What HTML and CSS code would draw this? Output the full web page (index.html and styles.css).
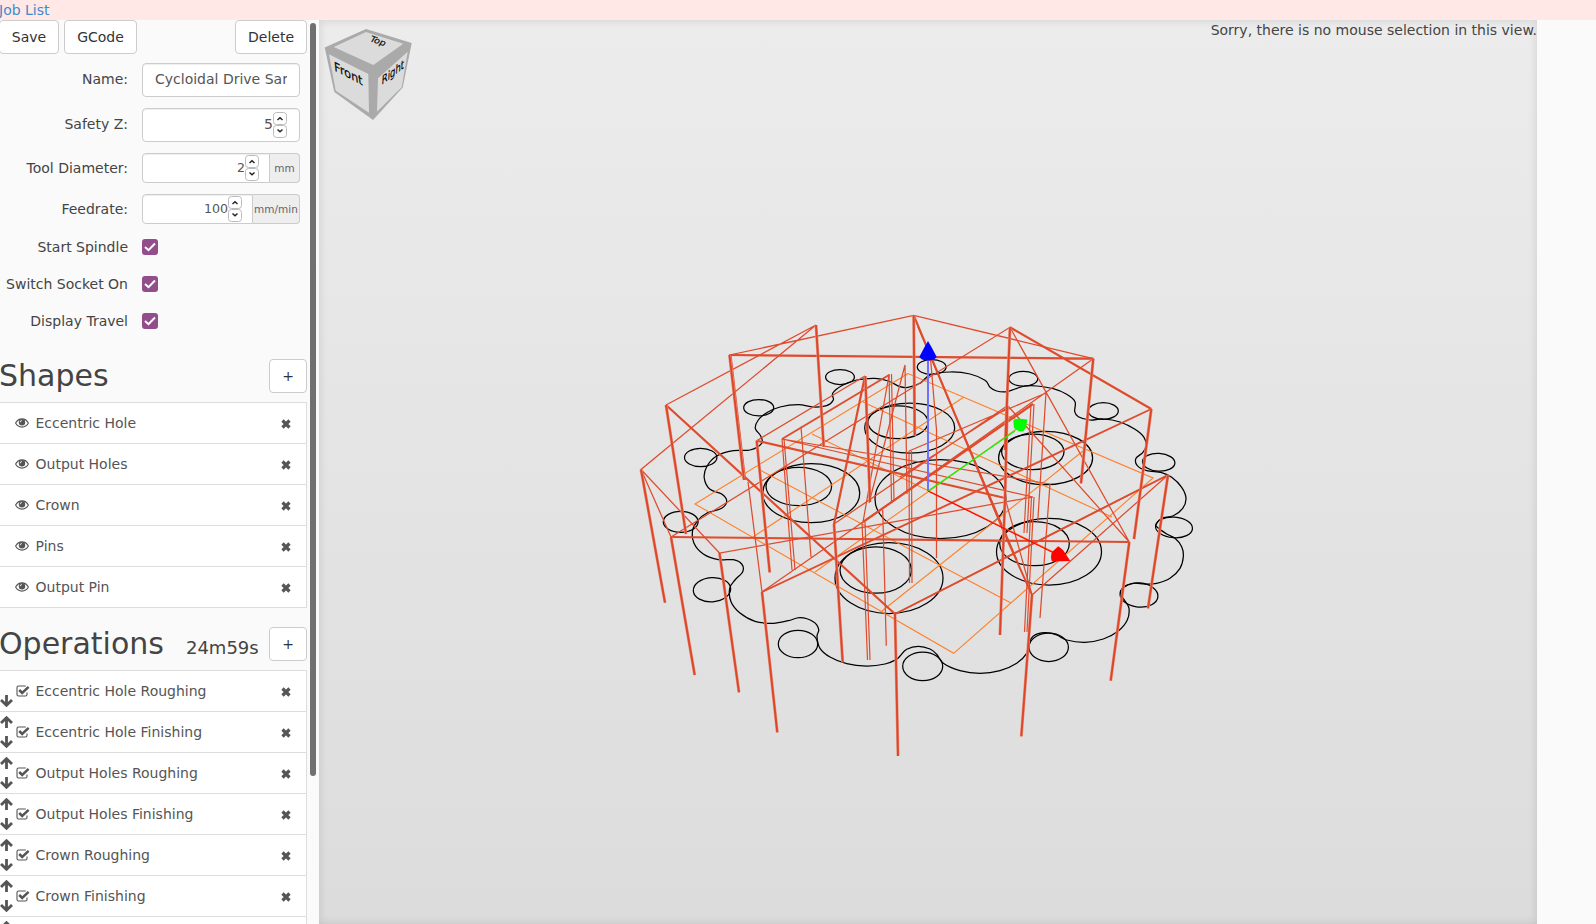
FILE: index.html
```html
<!DOCTYPE html>
<html lang="en">
<head>
<meta charset="utf-8">
<title>Job</title>
<link rel="stylesheet" href="styles.css">
</head>
<body>
<svg class="defs" aria-hidden="true">
  <symbol id="eye" viewBox="0 0 14 10"><path d="M.6 5C2 2.500 4.300.9 7 .9S12 2.500 13.400 5C12 7.500 9.700 9.100 7 9.100S2 7.500.6 5Z" fill="none" stroke="currentColor" stroke-width="1.100"/><circle cx="7" cy="4.300" r="3.200" fill="currentColor"/><path d="M5.200 4.300A1.800 1.800 0 0 1 7 2.500" fill="none" stroke="#fff" stroke-width=".8"/></symbol>
  <symbol id="cross" viewBox="0 0 10 10"><path d="M1.500 1.500 8.500 8.500M8.500 1.500 1.500 8.500" stroke="currentColor" stroke-width="3.200"/></symbol>
  <symbol id="check" viewBox="0 0 14 12"><path d="M11 7.500V9.500Q11 11 9.500 11H2.500Q1 11 1 9.500V2.500Q1 1 2.500 1H9.800" fill="none" stroke="currentColor" stroke-width="1.100"/><path d="M3.200 5 6.200 8 12.600 1.900" fill="none" stroke="currentColor" stroke-width="2.500"/></symbol>
  <symbol id="up" viewBox="0 0 13 12"><path d="M6.500 12V2M1 7 6.500 1.700 12 7" fill="none" stroke="currentColor" stroke-width="2.800"/></symbol>
  <symbol id="down" viewBox="0 0 13 12"><path d="M6.500 0V10M1 5 6.500 10.300 12 5" fill="none" stroke="currentColor" stroke-width="2.800"/></symbol>
  <symbol id="tick" viewBox="0 0 16 16"><path d="M3 8 6.500 11.200 13 4.500" fill="none" stroke="#fff" stroke-width="2"/></symbol>
  <symbol id="spin" viewBox="0 0 14 26"><rect x=".5" y=".5" width="13" height="12" rx="3" fill="#fff" stroke="#bbb"/><rect x=".5" y="13.500" width="13" height="12" rx="3" fill="#fff" stroke="#bbb"/><path d="M4.500 8 7 5.800 9.500 8M4.500 17.500 7 19.700 9.500 17.500" fill="none" stroke="#222" stroke-width="1.500"/></symbol>
</svg>
<header class="topbar"><a class="toplink">Job List</a></header>
<div class="workspace">
  <aside class="sidebar">
    <div class="panel">
      <div class="toolbar"><button class="btn save">Save</button><button class="btn gcode">GCode</button><button class="btn delete">Delete</button></div>
      <div class="form">
        <div class="field"><span class="label">Name:</span><div class="input name"><span class="clip">Cycloidal Drive Sample</span></div></div>
        <div class="field"><span class="label">Safety Z:</span><div class="input number">5<svg class="spin"><use href="#spin"/></svg></div></div>
        <div class="field short"><span class="label">Tool Diameter:</span><div class="input number">2<svg class="spin"><use href="#spin"/></svg></div><span class="unit mm">mm</span></div>
        <div class="field short"><span class="label">Feedrate:</span><div class="input number">100<svg class="spin"><use href="#spin"/></svg></div><span class="unit rate">mm/min</span></div>
        <div class="option"><span class="label">Start Spindle</span><svg class="checkbox"><use href="#tick"/></svg></div>
        <div class="option"><span class="label">Switch Socket On</span><svg class="checkbox"><use href="#tick"/></svg></div>
        <div class="option"><span class="label">Display Travel</span><svg class="checkbox"><use href="#tick"/></svg></div>
      </div>
      <div class="heading"><h2>Shapes</h2><button class="btn add">+</button></div>
      <ul class="list">
        <li><svg class="eye"><use href="#eye"/></svg><span>Eccentric Hole</span><svg class="cross"><use href="#cross"/></svg></li>
        <li><svg class="eye"><use href="#eye"/></svg><span>Output Holes</span><svg class="cross"><use href="#cross"/></svg></li>
        <li><svg class="eye"><use href="#eye"/></svg><span>Crown</span><svg class="cross"><use href="#cross"/></svg></li>
        <li><svg class="eye"><use href="#eye"/></svg><span>Pins</span><svg class="cross"><use href="#cross"/></svg></li>
        <li><svg class="eye"><use href="#eye"/></svg><span>Output Pin</span><svg class="cross"><use href="#cross"/></svg></li>
      </ul>
      <div class="heading ops-heading"><h2>Operations</h2><span class="time">24m59s</span><button class="btn add">+</button></div>
      <ul class="list ops">
        <li><div class="move"><svg class="arrow"><use href="#down"/></svg></div><svg class="check"><use href="#check"/></svg><span>Eccentric Hole Roughing</span><svg class="cross"><use href="#cross"/></svg></li>
        <li><div class="move"><svg class="arrow"><use href="#up"/></svg><svg class="arrow"><use href="#down"/></svg></div><svg class="check"><use href="#check"/></svg><span>Eccentric Hole Finishing</span><svg class="cross"><use href="#cross"/></svg></li>
        <li><div class="move"><svg class="arrow"><use href="#up"/></svg><svg class="arrow"><use href="#down"/></svg></div><svg class="check"><use href="#check"/></svg><span>Output Holes Roughing</span><svg class="cross"><use href="#cross"/></svg></li>
        <li><div class="move"><svg class="arrow"><use href="#up"/></svg><svg class="arrow"><use href="#down"/></svg></div><svg class="check"><use href="#check"/></svg><span>Output Holes Finishing</span><svg class="cross"><use href="#cross"/></svg></li>
        <li><div class="move"><svg class="arrow"><use href="#up"/></svg><svg class="arrow"><use href="#down"/></svg></div><svg class="check"><use href="#check"/></svg><span>Crown Roughing</span><svg class="cross"><use href="#cross"/></svg></li>
        <li><div class="move"><svg class="arrow"><use href="#up"/></svg><svg class="arrow"><use href="#down"/></svg></div><svg class="check"><use href="#check"/></svg><span>Crown Finishing</span><svg class="cross"><use href="#cross"/></svg></li>
        <li><div class="move"><svg class="arrow"><use href="#up"/></svg><svg class="arrow"><use href="#down"/></svg></div></li>
      </ul>
    </div>
    <div class="scrollbar"></div>
  </aside>
  <main class="view">
    <svg class="scene" viewBox="319 20 1218 904">
      <g class="cube">
        <path fill="#aaa" d="M366 29 411.700 43 402.700 87.500 373 120 334.300 92 324.700 47.500Z"/>
        <path fill="#dbdbdb" d="M366 32 403.300 43.700 373.300 65 333.700 47ZM329 54.300 368.300 74 369 112.700 335.700 90.700ZM378 78.300 407.700 51.700 401.700 87.300 377 111.700Z"/>
        <text transform="matrix(.94 .5 .1 1.060 334.500 70.500)">Front</text>
        <text transform="matrix(.71 -.54 -.06 1.020 381.500 85)">Right</text>
        <text transform="matrix(.76 .26 -.36 .62 369 41)">Top</text>
      </g>
      <g class="shape">
        <path id="gear"/>
        <ellipse cx="909.700" cy="428" rx="45" ry="25"/><ellipse cx="898" cy="422.300" rx="30" ry="16.400"/>
        <ellipse cx="1045.600" cy="458" rx="47" ry="26.700"/><ellipse cx="1032.800" cy="451.800" rx="31.200" ry="17.800"/>
        <ellipse cx="811.200" cy="493.200" rx="48.500" ry="29.500"/><ellipse cx="798.800" cy="486.500" rx="32.800" ry="19.200"/>
        <ellipse cx="889" cy="578" rx="54" ry="35.500"/><ellipse cx="875.700" cy="570" rx="35.700" ry="23.200"/>
        <ellipse cx="1049" cy="551.700" rx="52.500" ry="33.300"/><ellipse cx="1034.500" cy="543.700" rx="34.800" ry="22"/>
        <ellipse cx="940.500" cy="499" rx="65.500" ry="39.500"/>
        <ellipse cx="840" cy="377" rx="14.400" ry="7.500"/><ellipse cx="758.700" cy="407.700" rx="15" ry="8.200"/>
        <ellipse cx="700.700" cy="457.500" rx="16.200" ry="9.100"/><ellipse cx="680.700" cy="521.800" rx="17.400" ry="10.500"/>
        <ellipse cx="712" cy="589.700" rx="18.700" ry="12.100" transform="rotate(-4 712 589.700)"/><ellipse cx="798" cy="644" rx="19.700" ry="13.700"/>
        <ellipse cx="922.700" cy="666.300" rx="20" ry="14.300"/><ellipse cx="1048.700" cy="647.300" rx="19.700" ry="14.200"/>
        <ellipse cx="1139" cy="595" rx="19" ry="12.100" transform="rotate(5 1139 595)"/><ellipse cx="1174" cy="527.400" rx="18.500" ry="10.300" transform="rotate(4 1174 527.400)"/>
        <ellipse cx="1158.700" cy="462.300" rx="16.200" ry="8.900" transform="rotate(3 1158.700 462.300)"/><ellipse cx="1103.300" cy="411" rx="15" ry="8.300"/>
        <ellipse cx="1023.300" cy="378.700" rx="14.400" ry="7.400"/><ellipse cx="931.700" cy="367" rx="14.400" ry="7.400"/>
      </g>
      <path class="pocket" d="M908 373.500 695 504 953.700 653.300 1153 478ZM964 397 753 537M1025 423 815 572M1083 451 882 611M760 470 1011 603M812 434 1064 557M863 402 1112 517"/>
      <path class="travel" d="M816 325 666 405M816 325 641 469.500 671 537M641 469.500 719.500 553 1033 497M729.500 355 913.700 315.300 1093.300 358.700M671 537 1010 327.300 1129.300 542M762 592 1033 404M1032 595 1168 475 895 614M1008 406 1129.300 542M1093.300 358.700 863 522M756.700 440.700 865 376M782 439 1050 484M782 439 1033 497M834 524 1007 406M889 375 863 522M905 365 869 503M1046 393 909 451M1007 408 900 477M930 352 936.500 430V558M918 327 1017 560M801 426.700 811 557M882.700 510 886.300 645.700M905 365 907 494M1046 393 1037.700 522M1050 484 1040 618M1005 498 1032 595M748 482 762 592"/>
      <path class="travel pale" d="M729.500 355H731L745.500 480M782 439 792 570M784 439 795 570M889 374 891.500 501M891.500 374 894 501M909 451 909.500 583M911.500 451 912 583M862 522 867.500 660M865 522 870 660M1031 404 1024 533M1034 404 1027 533M1031.500 497 1024.500 632M1034 497 1027 632"/>
      <path class="travel thick" d="M729.500 355 1093.300 358.700M666 405 895 614M671 537 1129.300 542M913.700 315.300 1006 537M1010 327.300 1151.300 409M756.700 440.700 1005 498M865 376 834 524M863 522 1033 404"/>
      <path class="travel medium" d="M782 439 889 375M762 592 1151.300 409M895 614 1168 475M1006 537 1032 595"/>
      <path class="plunge" d="M816 325 823.700 446.700M729.500 355 744 480M666 405 686 534M641 469.500 665 602.700M671 537 694.700 675M719.500 553 739 692.300M762 592 777.300 732.300M895 614 898 756M1032 595 1021.300 736.300M1129.300 542 1110.700 680.700M1168 475 1148 608.300M1151.300 409 1134 539M1093.300 358.700 1081 483.300M1010 327.300 1005 450M913.700 315.300 914.700 436M865.300 376 870 502M756.700 440.700 769.700 572.300M834 524 842.700 662.300M1007.300 406 1005 498 1000 635"/>
      <path class="core" d="M816 325 823.700 446.700M729.500 355 744 480M666 405 686 534M641 469.500 665 602.700M671 537 694.700 675M719.500 553 739 692.300M762 592 777.300 732.300M895 614 898 756M1032 595 1021.300 736.300M1129.300 542 1110.700 680.700M1168 475 1148 608.300M1151.300 409 1134 539M1093.300 358.700 1081 483.300M1010 327.300 1005 450M913.700 315.300 914.700 436M865.300 376 870 502M756.700 440.700 769.700 572.300M834 524 842.700 662.300M1007.300 406 1005 498 1000 635"/>
      <path class="axis-z" d="M928 491V357"/><path fill="#00f" d="M928 341 932 348 936.700 357 934 359.500Q928 361.500 922 359.500L919.300 357 924 348Z"/>
      <path class="axis-y" d="M928 491 1015 431"/><path fill="#0f0" d="M1013.300 420.500 1018 418.500 1027.300 419.500 1026 427.500 1023.500 431 1019 431.500 1014 428Z"/>
      <path class="axis-x" d="M928 491 1060 556"/><path fill="red" d="M1058.300 546.300 1063 550 1070.300 561 1052 561.500Q1050 557 1052 552Z"/>
    </svg>
    <p class="notice">Sorry, there is no mouse selection in this view.</p>
  </main>
  <aside class="rightbar"></aside>
</div>
<script src="scene.js"></script>
</body>
</html>
```
FILE: styles.css
```css
* { box-sizing: border-box; }
body { margin: 0; height: 924px; overflow: hidden; background: #fafafa; color: #444; font: 14px/20px "DejaVu Sans", sans-serif; }
.defs { display: none; }
.topbar { height: 20px; background: #ffe8e6; }
.toplink { display: block; margin-left: -1px; color: #428bca; }
.workspace { display: flex; height: 904px; }
.sidebar { display: flex; width: 319px; gap: 3px; overflow: hidden; }
.panel { width: 307px; flex: none; }
.scrollbar { width: 6px; height: 753px; margin-top: 3px; border-radius: 3px; background: #707070; }
.toolbar { display: flex; gap: 5px; }
.btn { height: 34px; padding: 0; border: 1px solid #ccc; border-radius: 4px; background: #fff; color: #333; font: inherit; }
.save { width: 60px; margin-left: -1px; }
.gcode { width: 73px; }
.delete { width: 72px; margin-left: auto; }
.form { display: flex; flex-direction: column; padding: 9px 7px 0 0; }
.field { display: flex; align-items: center; height: 34px; margin-bottom: 11px; }
.field.short { height: 30px; }
.label { width: 128px; margin-right: 14px; padding-bottom: 2px; text-align: right; white-space: nowrap; flex: none; }
.short .label { padding-bottom: 0; }
.input { flex: 1; min-width: 0; height: 100%; display: flex; align-items: center; padding: 0 12px 2px; border: 1px solid #ccc; border-radius: 4px; background: #fff; color: #555; box-shadow: inset 0 1px 1px rgba(0,0,0,.07); }
.clip { overflow: hidden; white-space: nowrap; }
.number { justify-content: flex-end; }
.short .input { border-radius: 4px 0 0 4px; padding-right: 10px; padding-bottom: 0; font-size: 12.600px; }
.spin { width: 14px; height: 26px; }
.number:not(.short *) .spin { margin-bottom: -2px; }
.unit { height: 100%; border: 1px solid #ccc; border-left: 0; border-radius: 0 4px 4px 0; background: #eee; color: #666; text-align: center; line-height: 29px; font-size: 10.500px; }
.mm { width: 30px; }
.rate { width: 47px; }
.option { display: flex; align-items: center; height: 20px; margin: 2px 0 15px; }
.field + .option { margin-top: 3px; }
.checkbox { width: 16px; height: 16px; margin-top: -2px; border-radius: 3px; background: #924d8b; }
.heading { display: flex; align-items: center; height: 34px; margin-top: 12px; }
.heading h2 { margin: 0 0 0 -1px; font-size: 30px; font-weight: 400; line-height: 34px; }
.add { width: 38px; margin-left: auto; }
.time { margin: 8px 0 0 22px; font-size: 18px; }
.ops-heading { margin-top: 19px; }
.list { margin: 9px 0 0; padding: 0; list-style: none; border: 1px solid #ddd; border-left: 0; border-bottom: 0; background: #fff; }
.list li { display: flex; align-items: center; height: 41px; padding: 0 15px 0 15px; border-bottom: 1px solid #ddd; color: #555; }
.list span { margin-left: -.5px; }
.eye { width: 14px; height: 10px; margin-right: 7px; }
.cross { width: 10px; height: 10px; margin-left: auto; margin-top: 1px; }
.ops li { padding-left: 0; }
.move { display: flex; flex-direction: column; justify-content: flex-end; gap: 8px; width: 13px; height: 32px; margin: 0 3px 0 0; }
.arrow { width: 13px; height: 12px; flex: none; }
.check { width: 14px; height: 12px; margin-right: 6px; }
.view { position: relative; width: 1218px; flex: none; overflow: hidden; background: linear-gradient(#ececec, #dcdcdc); box-shadow: inset 0 0 10px rgba(0,0,0,.12); }
.scene { display: block; width: 1218px; height: 904px; }
.notice { position: absolute; top: 0; right: 0; margin: 0; white-space: nowrap; }
.cube text { font: 12px "DejaVu Sans", sans-serif; fill: #000; stroke: #000; stroke-width: .2; }
.shape { fill: none; stroke: #000; stroke-width: 1.250; }
.pocket { fill: none; stroke: #ff7f2a; stroke-width: 1.100; }
.travel { fill: none; stroke: #df4b2d; stroke-width: 1.250; }
.travel.pale { stroke-width: 1.200; }
.travel.medium { stroke-width: 1.900; }
.travel.thick { stroke-width: 2.200; }
.plunge { fill: none; stroke: #e8917e; stroke-width: 3; }
.core { fill: none; stroke: #dd4628; stroke-width: 1.900; }
.axis-z { stroke: #7070ff; stroke-width: 2; }
.axis-y { stroke: #0f0; stroke-width: 1.200; }
.axis-x { stroke: #f00; stroke-width: 1.200; }
```
FILE: scene.js
```js
// Crown profile, drawn as a closed smooth curve through sampled points.
const points = `900,386.7 908,387.3 920,383.3 930,375 950,372 970,374 985,380.3 990,387.3 996.7,391 1006.7,391.7 1015,389
1025,386 1036.7,386 1053.3,388.7 1066.7,394.3 1075,401.7 1074.7,411.7 1078.3,416.7 1090,420 1103.3,419 1120,422 1135,429.3
1144,437.3 1146,446 1142.7,452.7 1136,458.3 1137.3,465.7 1146.7,470.7 1161.7,472.7 1171.7,477.3 1181.7,487.3 1186,498.3
1182.7,508.3 1173.3,515.7 1161.7,518.3 1156.3,524 1157.3,527.3 1166.7,534 1175,538.3 1181.7,546.7 1183.3,556.7 1180,568.3
1170,578.3 1156.7,583.3 1145,584 1133.3,583.3 1123.3,587.7 1120.7,594 1125,601 1129,608.3 1127.3,620 1118.3,631 1103.3,639
1085,642.3 1066.7,640 1056.7,635 1045,632.7 1033.3,636 1029,644 1026.7,653.3 1016.7,663.3 1000,670.7 980,673.3 960,670.7
943.3,663.3 936.7,654.3 930,649 918.3,646.3 906.7,649.3 900,656 896.7,659.3 885,664 866.7,666 846.7,663.7 830,657
820,648.3 817,636.7 818.7,629.3 813.3,621.7 800,617.7 788.3,620.7 773.3,623.3 755,621.3 740,613 731,601.7 729.7,588.3
735,580 742.7,571.7 741.7,564 733.3,559.7 718.3,559.7 703.3,554 694,543.3 692.7,530 698.3,520 706.7,513.3 721.7,508.3
726.7,501 721.7,494 710,489.3 704.3,478.3 706.7,466.7 716.7,456 733.3,450.7 750,450 761.7,443.3 760.7,436 755.3,428.3
758.3,420 766.7,412.7 780,407 798.3,404.7 813.3,407 826.7,405.7 833.3,400 832.7,393.3 841.7,385.7 856.7,380 875,378.3 888.3,381`
  .split(/\s+/).map(p => p.split(',').map(Number));
const n = points.length;
let d = `M${points[0]}`;
for (let i = 0; i < n; i++) {
  const [a, b, c, e] = [-1, 0, 1, 2].map(k => points[(i + k + n) % n]);
  const c1 = b.map((v, k) => v + (c[k] - a[k]) / 6);
  const c2 = c.map((v, k) => v - (e[k] - b[k]) / 6);
  d += `C${c1} ${c2} ${c}`;
}
document.getElementById('gear').setAttribute('d', d + 'Z');
```
